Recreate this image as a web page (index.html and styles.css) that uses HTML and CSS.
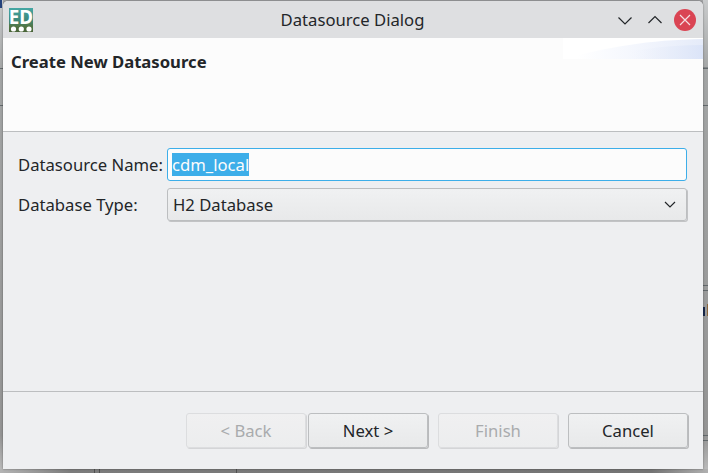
FILE: index.html
```
<!DOCTYPE html>
<html lang="en">
<head>
<meta charset="utf-8">
<title>Datasource Dialog</title>
<link rel="stylesheet" href="styles.css">
</head>
<body>
<svg class="backdrop" viewBox="0 0 708 473" aria-hidden="true">
  <defs>
    <linearGradient id="side" x2="0" y2="1"><stop offset="0" stop-color="#c9cbcc"/><stop offset=".15" stop-color="#a3a5a5"/><stop offset=".92" stop-color="#949494"/><stop offset="1" stop-color="#bdbdbd"/></linearGradient>
    <linearGradient id="foot"><stop offset="0" stop-color="#b4b4b4"/><stop offset=".1" stop-color="#7c7c7c"/><stop offset=".92" stop-color="#747474"/><stop offset="1" stop-color="#b0b0b0"/></linearGradient>
  </defs>
  <path fill="#a1a2a4" d="M0 0h708v473H0z"/>
  <path fill="url(#side)" d="M0 0h3v473H0zM703 0h5v473h-5z"/>
  <path fill="url(#foot)" d="M0 469h708v4H0z"/>
  <path fill="#25427c" d="M0 0h2v8H0z"/>
  <path fill="#63696c" d="M0 68h3v1H0zM0 105h3v1H0zM703 67.500h5v1.500h-5zM703 105h5v1h-5zM703 285h5v1h-5zM703 290h5v1h-5zM703 435h5v1h-5zM703 440h5v1h-5z"/>
  <path fill="#505050" d="M94 469h1v4h-1zM99 469h1v4h-1zM236 469h1v4h-1z"/>
  <path fill="#18284c" d="M703 307h2v9h-2z"/>
  <path fill="#8b653c" d="M707 304h1v12h-1z"/>
</svg>
<main class="dialog">
  <header class="titlebar">
    <svg class="app-icon" viewBox="0 0 24 24">
      <defs><linearGradient id="app" x2="0" y2="1"><stop offset="0" stop-color="#45a7a4"/><stop offset=".5" stop-color="#3d897c"/><stop offset=".75" stop-color="#527747"/><stop offset="1" stop-color="#486236"/></linearGradient></defs>
      <path fill="url(#app)" d="M0 0h24v24H0z"/>
      <text class="app-letters" x="-.3" y="15.500" textLength="24.300" lengthAdjust="spacingAndGlyphs">ED</text>
      <g fill="#fff"><circle cx="4.500" cy="21" r="2.600"/><circle cx="12.300" cy="21" r="2.600"/><circle cx="20" cy="21" r="2.600"/></g>
    </svg>
    <h1 class="title">Datasource Dialog</h1>
    <div class="controls">
      <svg viewBox="0 0 22 22"><path class="chevron" d="M4.500 8.500 11 15l6.500-6.500"/></svg>
      <svg viewBox="0 0 22 22"><path class="chevron" d="M4.500 14 11 7.500l6.500 6.500"/></svg>
      <svg viewBox="0 0 22 22"><circle cx="11" cy="11" r="11" fill="#da4453"/><path class="cross" d="m6 6 10 10M16 6 6 16"/></svg>
    </div>
  </header>
  <section class="banner">
    <h2 class="heading">Create New Datasource</h2>
    <svg class="swoosh" viewBox="0 0 140 21">
      <defs>
        <linearGradient id="s1"><stop offset=".1" stop-color="#fff"/><stop offset=".55" stop-color="#f3f6fd"/><stop offset="1" stop-color="#e5ebf9"/></linearGradient>
        <linearGradient id="s2"><stop offset=".35" stop-color="#edf1fb" stop-opacity="0"/><stop offset="1" stop-color="#dbe4f8"/></linearGradient>
      </defs>
      <path fill="#fff" d="M0 0h140v21H0z"/>
      <path fill="url(#s1)" d="M0 21C45 9 85 2 140 1v20z"/>
      <path fill="url(#s2)" d="M30 21C70 12 100 7 140 7v14z"/>
    </svg>
  </section>
  <section class="form">
    <span>Datasource Name:</span>
    <div class="field"><span class="selected">cdm_local</span></div>
    <span>Database Type:</span>
    <div class="field select"><span>H2 Database</span><svg viewBox="0 0 12 8"><path class="chevron" d="m1 1 5 5 5-5"/></svg></div>
  </section>
  <footer class="actions">
    <button class="button" disabled>&lt; Back</button>
    <button class="button next">Next &gt;</button>
    <button class="button" disabled>Finish</button>
    <button class="button cancel">Cancel</button>
  </footer>
</main>
</body>
</html>
```
FILE: styles.css
```
* { box-sizing: border-box; }
body {
  margin: 0;
  width: 708px;
  height: 473px;
  overflow: hidden;
  padding: 1px 5px 4px 3px;
  font: 16.67px/24px "Noto Sans", sans-serif;
  color: #232629;
}
.backdrop { position: absolute; inset: 0; width: 708px; height: 473px; z-index: -1; }
.dialog {
  display: flex;
  flex-direction: column;
  height: 468px;
  overflow: hidden;
  border-radius: 5px 5px 0 0;
  background: #eeeff1;
  box-shadow: 0 0 2px #0007;
}
.titlebar {
  display: grid;
  grid-template-columns: 86px 1fr 86px;
  align-items: center;
  height: 37px;
  padding: 0 7px 0 6px;
  background: #dedfe1;
}
.app-icon { width: 24px; height: 24px; }
.app-letters { font: 700 19px "Noto Sans", sans-serif; fill: #fff; }
.title { margin: 0; font-size: inherit; font-weight: 400; text-align: center; }
.controls { display: flex; gap: 8px; justify-content: flex-end; }
.controls svg { width: 22px; height: 22px; flex: none; }
.chevron { fill: none; stroke: #232629; stroke-width: 1.2; }
.cross { fill: none; stroke: #f5dfe2; stroke-width: 1.2; }
.banner {
  display: flex;
  justify-content: space-between;
  align-items: flex-start;
  height: 94px;
  padding-left: 8px;
  border-bottom: 1px solid #bcbec0;
  background: #fcfcfc;
}
.heading { margin: 12px 0 0; font-size: 16.67px; font-weight: 700; }
.swoosh { width: 140px; height: 21px; }
.form {
  display: grid;
  grid-template-columns: 143px 521px;
  grid-template-rows: 34px 34px;
  gap: 6px;
  flex: 1;
  align-content: start;
  align-items: center;
  padding: 16px 0 0 15px;
  white-space: nowrap;
}
.field {
  display: flex;
  align-items: center;
  width: 520px;
  height: 33px;
  padding: 0 4px;
  align-self: start;
  border: 1px solid #3daee9;
  border-radius: 3px;
  background: #fcfcfc;
}
.selected { height: 23px; line-height: 23px; background: #3daee9; color: #fcfcfc; }
.select {
  justify-content: space-between;
  padding: 0 10px 0 5px;
  border-color: #bcbec0;
  background: linear-gradient(#f0f1f2, #e8e9ea);
  box-shadow: 1px 1px 0 #c2c3c5;
}
.select svg { width: 12px; height: 8px; }
.actions {
  display: flex;
  justify-content: flex-end;
  height: 78px;
  padding: 21px 15px 0 0;
  border-top: 1px solid #bcbec0;
}
.button {
  width: 120px;
  height: 35px;
  padding: 0;
  border: 1px solid #bcbec0;
  border-radius: 3px;
  background: linear-gradient(#f0f1f2, #e8e9ea);
  box-shadow: 1px 1px 0 #b9babc;
  color: inherit;
  font: inherit;
}
.button:disabled {
  border-color: #dcdddf;
  background: linear-gradient(#f0f0f1, #ecedee);
  box-shadow: 1px 1px 0 #d4d5d7;
  color: #a9abad;
}
.next { margin: 0 10px 0 2px; }
.cancel { margin-left: 10px; }
```
